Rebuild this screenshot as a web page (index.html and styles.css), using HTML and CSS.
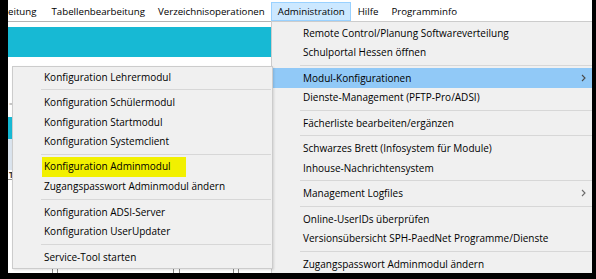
FILE: index.html
```html
<!DOCTYPE html>
<html lang="de">
<head>
    <meta charset="UTF-8">
    <title>Administration</title>
    <link rel="stylesheet" href="styles.css">
</head>
<body>
    <div class="window">
        <div class="menubar">
            <div class="menubar-item first">eitung</div>
            <div class="menubar-item">Tabellenbearbeitung</div>
            <div class="menubar-item">Verzeichnisoperationen</div>
            <div class="menubar-item open">Administration</div>
            <div class="menubar-item">Hilfe</div>
            <div class="menubar-item">Programminfo</div>
        </div>
        <div class="workspace">
            <div class="toolbar-gap"></div>
            <div class="toolbar"></div>
            <div class="pane-blank"><span class="pane-mark">=</span></div>
            <div class="pane-cyan"></div>
            <div class="pane-light"></div>
            <div class="grid-head">T</div>
            <div class="grid">
                <div class="cell cell-a"></div>
                <div class="cell cell-b"></div>
                <div class="cell cell-c"></div>
                <div class="cell cell-d"></div>
            </div>
        </div>

        <div class="menu menu-admin">
            <div class="menu-item">Remote Control/Planung Softwareverteilung</div>
            <div class="menu-item">Schulportal Hessen öffnen</div>
            <div class="menu-sep"></div>
            <div class="menu-item active">Modul-Konfigurationen
                <svg class="arrow" width="5" height="8" viewBox="0 0 5 8"><path d="M1 1 L4 4 L1 7" fill="none" stroke="#4a4a4a" stroke-width="1.1"/></svg>
            </div>
            <div class="menu-item">Dienste-Management (PFTP-Pro/ADSI)</div>
            <div class="menu-sep"></div>
            <div class="menu-item">Fächerliste bearbeiten/ergänzen</div>
            <div class="menu-sep"></div>
            <div class="menu-item">Schwarzes Brett (Infosystem für Module)</div>
            <div class="menu-item">Inhouse-Nachrichtensystem</div>
            <div class="menu-sep"></div>
            <div class="menu-item">Management Logfiles
                <svg class="arrow" width="5" height="8" viewBox="0 0 5 8"><path d="M1 1 L4 4 L1 7" fill="none" stroke="#6a6a6a" stroke-width="1.1"/></svg>
            </div>
            <div class="menu-sep"></div>
            <div class="menu-item">Online-UserIDs überprüfen</div>
            <div class="menu-item">Versionsübersicht SPH-PaedNet Programme/Dienste</div>
            <div class="menu-sep"></div>
            <div class="menu-item">Zugangspasswort Adminmodul ändern</div>
        </div>

        <div class="menu menu-modules">
            <div class="menu-item">Konfiguration Lehrermodul</div>
            <div class="menu-sep"></div>
            <div class="menu-item">Konfiguration Schülermodul</div>
            <div class="menu-item">Konfiguration Startmodul</div>
            <div class="menu-item">Konfiguration Systemclient</div>
            <div class="menu-sep"></div>
            <div class="menu-item"><span class="marker">Konfiguration Adminmodul</span></div>
            <div class="menu-item">Zugangspasswort Adminmodul ändern</div>
            <div class="menu-sep"></div>
            <div class="menu-item">Konfiguration ADSI-Server</div>
            <div class="menu-item">Konfiguration UserUpdater</div>
            <div class="menu-sep"></div>
            <div class="menu-item">Service-Tool starten</div>
        </div>
    </div>
</body>
</html>
```

FILE: styles.css
```css
:root {
    --menu-bg: #f0f0f0;
    --menu-border: #cccccc;
    --menu-hover: #91c9f7;
    --cyan: #17b9d4;
    --text-color: #000000;
}
body {
    margin: 0;
    background-color: #000000;
    font-family: 'Open Sans', 'Noto Sans', sans-serif;
    font-size: 10px;
    color: var(--text-color);
}
.window {
    position: relative;
    width: 584px;
    height: 273px;
    margin-left: 8px;
    background-color: #ffffff;
    overflow: hidden;
}
.menubar {
    display: flex;
    height: 21px;
    border-bottom: 1px solid #b4b4b4;
    white-space: nowrap;
    font-size: 9.7px;
}
.menubar-item {
    padding: 0 5.5px;
    margin-top: 2px;
    line-height: 17px;
    border: 1px solid transparent;
}
.menubar-item.first {
    padding-left: 0;
    border-left: none;
    margin-right: 2px;
}
.menubar-item.open {
    background-color: #cce8ff;
    border-color: #99d1ff;
}
.workspace {
    display: flex;
    flex-direction: column;
}
.toolbar-gap {
    height: 5px;
}
.toolbar {
    height: 30px;
    background-color: var(--cyan);
}
.pane-blank {
    height: 60px;
    position: relative;
}
.pane-mark {
    position: absolute;
    left: 1px;
    top: 42px;
    font-size: 7px;
    color: #9a9a9a;
}
.pane-cyan {
    height: 22px;
    background-color: var(--cyan);
}
.pane-light {
    height: 31px;
    background-color: #dbe4ee;
}
.grid-head {
    height: 8px;
    padding-left: 1px;
    padding-top: 1px;
    font-size: 8px;
    font-weight: 700;
    line-height: 8px;
    border-bottom: 1px solid #9a9a9a;
    color: #333333;
}
.grid {
    flex-grow: 1;
    display: flex;
    gap: 4px;
    height: 100px;
}
.cell {
    border-left: 1px solid #8a8a8a;
    border-right: 1px solid #8a8a8a;
}
.cell-a {
    width: 44px;
    border-left: none;
}
.cell-b {
    width: 115px;
}
.cell-c {
    width: 53px;
    margin-left: 1px;
}
.cell-d {
    width: 60px;
}
.menu {
    position: absolute;
    background-color: var(--menu-bg);
    border: 1px solid var(--menu-border);
    white-space: nowrap;
}
.menu-admin {
    left: 263px;
    top: 21px;
    width: 340px;
    padding-top: 1px;
}
.menu-modules {
    left: 4px;
    top: 66px;
    width: 259px;
    padding-bottom: 1px;
    box-shadow: 1px 1px 2px rgba(0, 0, 0, 0.12);
}
.menu-item {
    display: flex;
    align-items: center;
    justify-content: space-between;
    height: 19.5px;
    padding-left: 31px;
    padding-right: 26px;
}
.menu-item.active {
    background-color: var(--menu-hover);
}
.menu-sep {
    display: flex;
    align-items: center;
    height: 6px;
    padding-left: 28px;
    padding-right: 1px;
}
.menu-sep::after {
    content: "";
    flex-grow: 1;
    height: 1px;
    background-color: #d7d7d7;
}
.marker {
    display: inline-block;
    width: 144px;
    height: 19.5px;
    line-height: 19.5px;
    margin-left: -2px;
    padding-left: 2px;
    box-sizing: border-box;
    background-color: #f2f000;
}
```
